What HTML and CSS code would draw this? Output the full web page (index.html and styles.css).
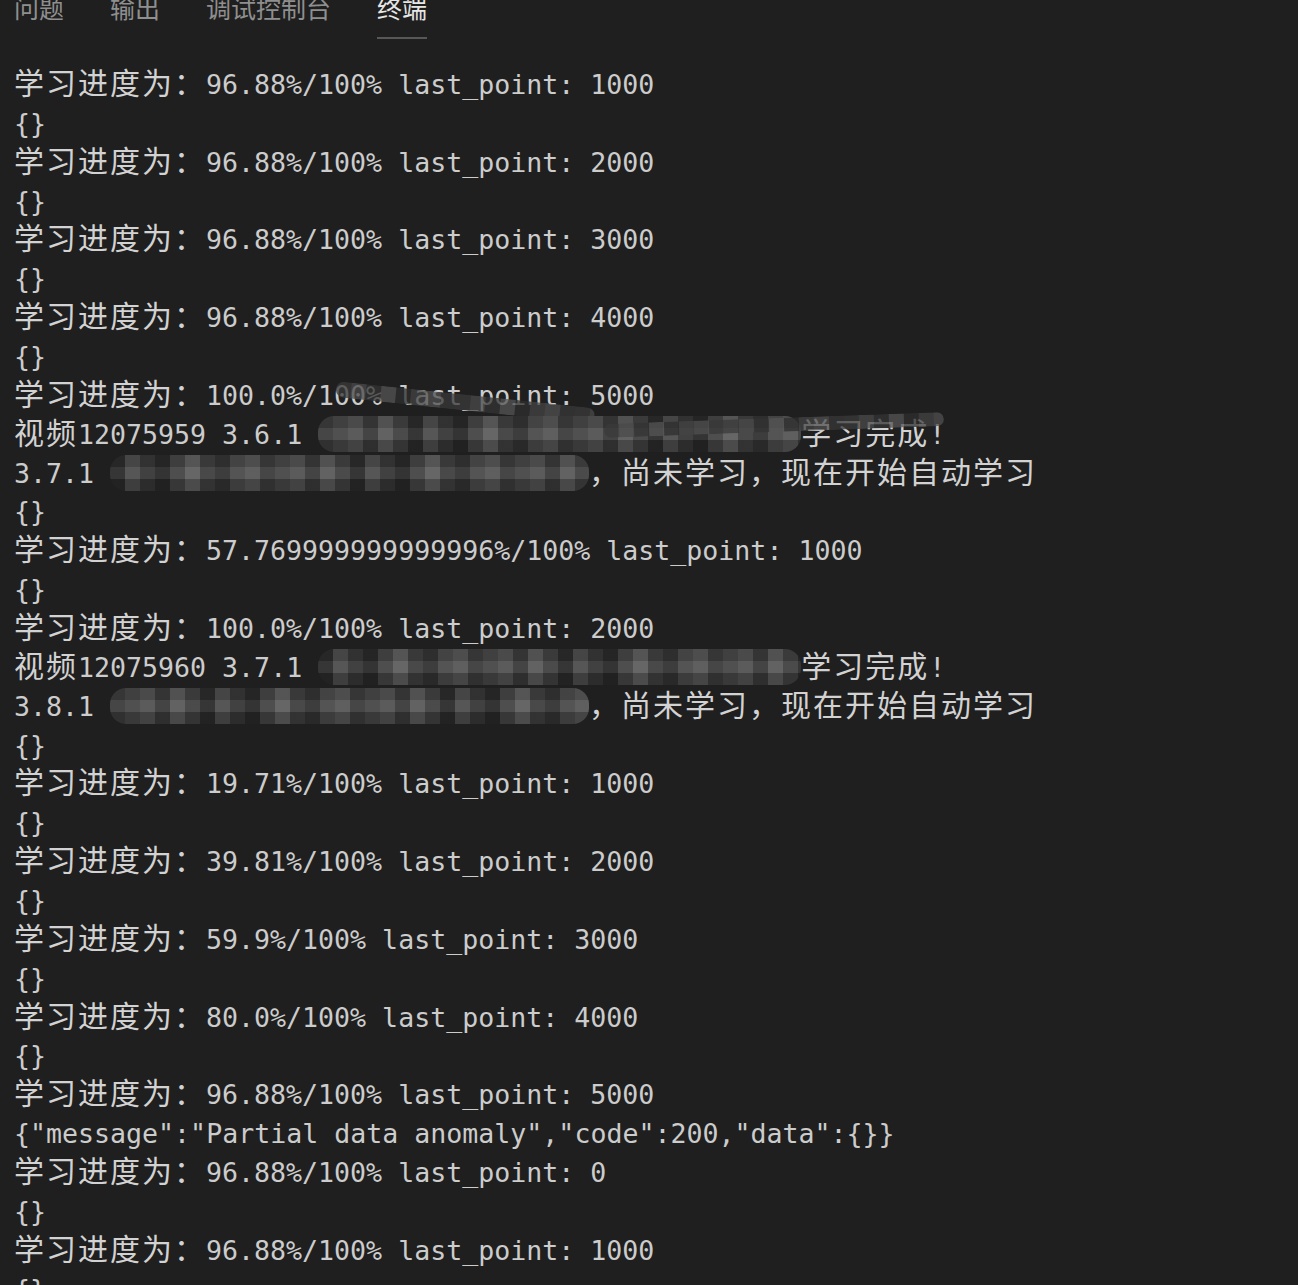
FILE: index.html
```html
<!DOCTYPE html>
<html lang="zh">
<head>
<meta charset="utf-8">
<title>终端</title>
<link rel="stylesheet" href="styles.css">
</head>
<body>
<div class="panel">
  <div class="tabs">
    <div class="tab">问题</div>
    <div class="tab">输出</div>
    <div class="tab">调试控制台</div>
    <div class="tab active">终端</div>
  </div>
  <div class="term">
    <div class="line"><span class="c">学习进度为：</span>96.88%/100% last_point: 1000</div>
    <div class="line">{}</div>
    <div class="line"><span class="c">学习进度为：</span>96.88%/100% last_point: 2000</div>
    <div class="line">{}</div>
    <div class="line"><span class="c">学习进度为：</span>96.88%/100% last_point: 3000</div>
    <div class="line">{}</div>
    <div class="line"><span class="c">学习进度为：</span>96.88%/100% last_point: 4000</div>
    <div class="line">{}</div>
    <div class="line"><span class="c">学习进度为：</span>100.0%/100% last_point: 5000<span class="swoosh swoosh-a"></span></div>
    <div class="line"><span class="c">视频</span>12075959 3.6.1 <span class="mz mz-wide"></span><span class="c">学习完成</span>!<span class="swoosh swoosh-b"></span></div>
    <div class="line">3.7.1 <span class="mz mz-narrow mz-alt"></span><span class="c">，尚未学习，现在开始自动学习</span></div>
    <div class="line">{}</div>
    <div class="line"><span class="c">学习进度为：</span>57.769999999999996%/100% last_point: 1000</div>
    <div class="line">{}</div>
    <div class="line"><span class="c">学习进度为：</span>100.0%/100% last_point: 2000</div>
    <div class="line"><span class="c">视频</span>12075960 3.7.1 <span class="mz mz-wide mz-alt"></span><span class="c">学习完成</span>!</div>
    <div class="line">3.8.1 <span class="mz mz-narrow"></span><span class="c">，尚未学习，现在开始自动学习</span></div>
    <div class="line">{}</div>
    <div class="line"><span class="c">学习进度为：</span>19.71%/100% last_point: 1000</div>
    <div class="line">{}</div>
    <div class="line"><span class="c">学习进度为：</span>39.81%/100% last_point: 2000</div>
    <div class="line">{}</div>
    <div class="line"><span class="c">学习进度为：</span>59.9%/100% last_point: 3000</div>
    <div class="line">{}</div>
    <div class="line"><span class="c">学习进度为：</span>80.0%/100% last_point: 4000</div>
    <div class="line">{}</div>
    <div class="line"><span class="c">学习进度为：</span>96.88%/100% last_point: 5000</div>
    <div class="line">{"message":"Partial data anomaly","code":200,"data":{}}</div>
    <div class="line"><span class="c">学习进度为：</span>96.88%/100% last_point: 0</div>
    <div class="line">{}</div>
    <div class="line"><span class="c">学习进度为：</span>96.88%/100% last_point: 1000</div>
    <div class="line">{}</div>
  </div>
</div>
</body>
</html>
```

FILE: styles.css
```css
html, body {
  margin: 0;
  padding: 0;
  background: #1f1f1f;
  height: 100%;
  overflow: hidden;
}

.panel {
  background: #1f1f1f;
  color: #cccccc;
}

.tabs {
  display: flex;
  gap: 46px;
  padding-left: 14px;
  margin-top: -5px;
  font-family: "Noto Sans CJK SC", sans-serif;
  font-size: 25px;
}

.tab {
  line-height: 25px;
  padding-bottom: 17px;
  border-bottom: 2px solid transparent;
  color: #8f8f8f;
}

.tab.active {
  color: #e6e6e6;
  border-bottom-color: #575757;
}

.term {
  margin-top: 27px;
  padding-left: 14px;
  font-family: "DejaVu Sans Mono", monospace;
  font-size: 26.6px;
  color: #cccccc;
}

.line {
  position: relative;
  height: 38.87px;
  line-height: 38.87px;
  white-space: pre;
}

.c {
  font-family: "Noto Sans CJK SC", sans-serif;
  font-size: 30px;
  letter-spacing: 2px;
  line-height: 1;
  color: #d2d2d2;
}

.mz {
  display: inline-block;
  height: 36px;
  vertical-align: -8px;
  border-radius: 16px;
  background:
    linear-gradient(to bottom, rgba(0,0,0,0.10) 0 12px, rgba(255,255,255,0.05) 12px 24px, rgba(0,0,0,0.20) 24px),
    linear-gradient(to right, #3c3c3c 0 15px, #474747 15px 30px, #525252 30px 45px, #3a3a3a 45px 60px, #5a5a5a 60px 75px, #414141 75px 90px, #2b2b2b 90px 105px, #4d4d4d 105px 120px, #373737 120px 135px, #292929 135px 150px, #454545 150px 165px, #5e5e5e 165px 180px, #3f3f3f 180px 195px, #333333 195px 210px, #4b4b4b 210px 225px, #565656 225px 240px);
  background-size: 100% 100%, 240px 100%;
}

.mz-alt {
  background-position: 0 0, -90px 0;
}

.mz-wide {
  width: 483px;
}

.mz-narrow {
  width: 479px;
}

.swoosh {
  position: absolute;
  height: 16px;
  border-radius: 8px;
  opacity: 0.75;
  background: linear-gradient(to right, #3a3a3a 0 15px, #4a4a4a 15px 30px, #333 30px 45px, #555 45px 60px, #2e2e2e 60px 75px, #444 75px 90px, #505050 90px 105px, #383838 105px 120px);
  background-size: 120px 100%;
}

.swoosh-a {
  left: 322px;
  top: 4px;
  width: 260px;
  transform: rotate(6deg);
  transform-origin: left center;
}

.swoosh-b {
  left: 590px;
  top: 2px;
  width: 340px;
  height: 14px;
  transform: rotate(-2deg);
}
```
